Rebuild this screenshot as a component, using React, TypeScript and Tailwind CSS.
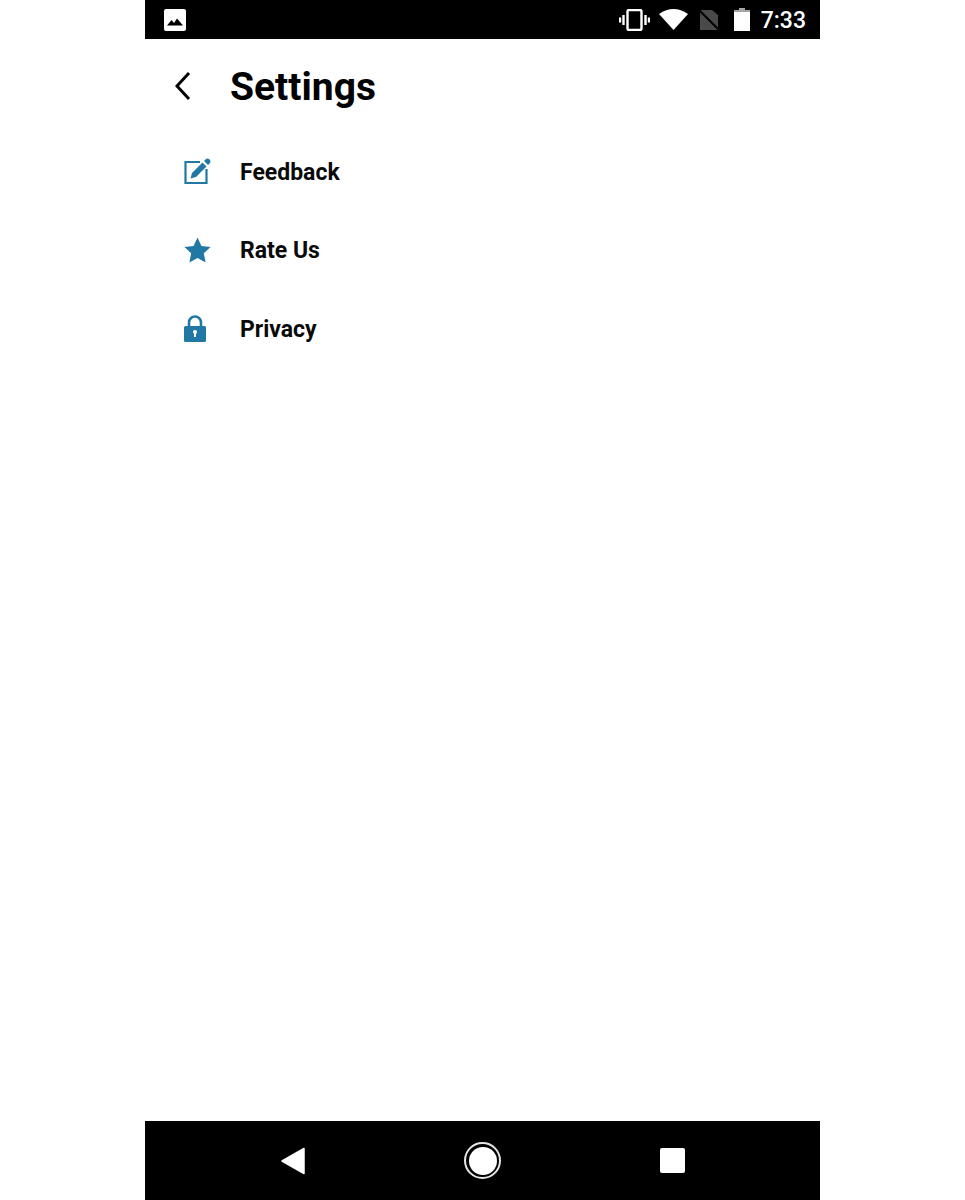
const teal = "#2178a4";

const StatusBar = () => (
  <div className="h-[39px] bg-black flex items-center justify-between pl-[19px] pr-[14px]">
    <svg width="22" height="22" viewBox="0 0 22 22">
      <rect x="0" y="0" width="22" height="22" rx="2" fill="#fff" />
      <path d="M3 16.5 L7.5 11 L10 14 L13 9.5 L19 16.5 Z" fill="#000" />
    </svg>
    <div className="flex items-center">
      <svg width="31" height="22" viewBox="0 0 31 22" fill="none" className="mr-[9px]">
        <rect x="8.5" y="1" width="14" height="20" rx="1.5" stroke="#fff" strokeWidth="2.4" />
        <path d="M4.5 6v10M1 8.5v5M26.5 6v10M30 8.5v5" stroke="#fff" strokeWidth="2.4" />
      </svg>
      <svg width="29" height="21" viewBox="0 0 29 21" className="mr-[11px]">
        <path d="M14.5 21 L0 5 Q14.5 -5 29 5 Z" fill="#fff" />
      </svg>
      <svg width="20" height="21" viewBox="0 0 20 21" className="mr-[15px]">
        <path d="M1 21 V1 H13 L19 6 V21 Z" fill="#4a4a4a" />
        <path d="M0 1 L20 21" stroke="#000" strokeWidth="2" />
      </svg>
      <svg width="16" height="23" viewBox="0 0 16 23" className="mr-[11px]">
        <path d="M5 0 H11 V2 H16 V23 H0 V2 H5 Z" fill="#fff" />
        <rect x="0" y="0" width="16" height="4" fill="#000" opacity="0.35" />
      </svg>
      <span className="pt-[2px] text-[23px] leading-none font-medium text-white">7:33</span>
    </div>
  </div>
);

const FeedbackIcon = () => (
  <svg width="28" height="28" viewBox="0 0 28 28" fill="none" className="ml-px -mt-[2px]">
    <path d="M16 5 H1.5 V26 H22.5 V12" stroke={teal} strokeWidth="2.2" />
    <path d="M6.5 21.5 L8 16 L18.5 5.5 L22.5 9.5 L12 20 Z" fill={teal} />
    <path d="M20 4 L22 2 Q23.5 1 25 2 L26 3 Q27 4.5 26 6 L24 8 Z" fill={teal} />
  </svg>
);

const StarIcon = () => (
  <svg width="27" height="26" viewBox="0 0 26 25" className="ml-px">
    <path d="M13 0.5 L16.8 8.6 L25.6 9.7 L19.1 15.7 L20.8 24.5 L13 20.2 L5.2 24.5 L6.9 15.7 L0.4 9.7 L9.2 8.6 Z" fill={teal} />
  </svg>
);

const LockIcon = () => (
  <svg width="22" height="27" viewBox="0 0 22 27" fill="none" className="ml-px">
    <path d="M5 12 V7.5 a6 6 0 0 1 12 0 V12" stroke={teal} strokeWidth="2.6" />
    <path d="M1.5 11 H20.5 A1.5 1.5 0 0 1 22 12.5 V25.5 A1.5 1.5 0 0 1 20.5 27 H1.5 A1.5 1.5 0 0 1 0 25.5 V12.5 A1.5 1.5 0 0 1 1.5 11 Z" fill={teal} />
    <circle cx="11" cy="17" r="2" fill="#fff" />
    <rect x="10" y="17" width="2" height="5" fill="#fff" />
  </svg>
);

const items = [
  { label: "Feedback", icon: <FeedbackIcon /> },
  { label: "Rate Us", icon: <StarIcon /> },
  { label: "Privacy", icon: <LockIcon /> },
];

export default function App() {
  return (
    <div className="h-[1200px] bg-white flex justify-center font-['Roboto',sans-serif]">
      <div className="w-[675px] flex flex-col">
        <StatusBar />
        <div className="flex-1 bg-white">
          <div className="h-[93.5px] flex items-center pl-[30px]">
            <svg width="16" height="30" viewBox="0 0 16 30" fill="none">
              <path d="M14 2 L2 15 L14 28" stroke="#000" strokeWidth="3" />
            </svg>
            <h1 className="ml-[39px] pt-[4px] text-[39px] leading-none font-bold text-black">Settings</h1>
          </div>
          <div className="flex flex-col">
            {items.map((item) => (
              <div key={item.label} className="h-[78.5px] flex items-center pl-[38px]">
                <div className="w-[57px] flex items-center">{item.icon}</div>
                <span className="pt-[1px] text-[23px] leading-none font-bold text-[#0a0a0a]">{item.label}</span>
              </div>
            ))}
          </div>
        </div>
        <div className="h-[79px] bg-black flex items-center justify-between pl-[136px] pr-[135px]">
          <svg width="24" height="28" viewBox="0 0 24 28">
            <path d="M23 1.5 V26.5 L1 14 Z" fill="#fff" stroke="#fff" strokeWidth="1.5" strokeLinejoin="round" />
          </svg>
          <div className="w-[37px] h-[37px] rounded-full border-2 border-[#e5e5e5] flex items-center justify-center">
            <div className="w-[28px] h-[28px] rounded-full bg-white" />
          </div>
          <div className="w-[25px] h-[25px] rounded-[2px] bg-white" />
        </div>
      </div>
    </div>
  );
}
